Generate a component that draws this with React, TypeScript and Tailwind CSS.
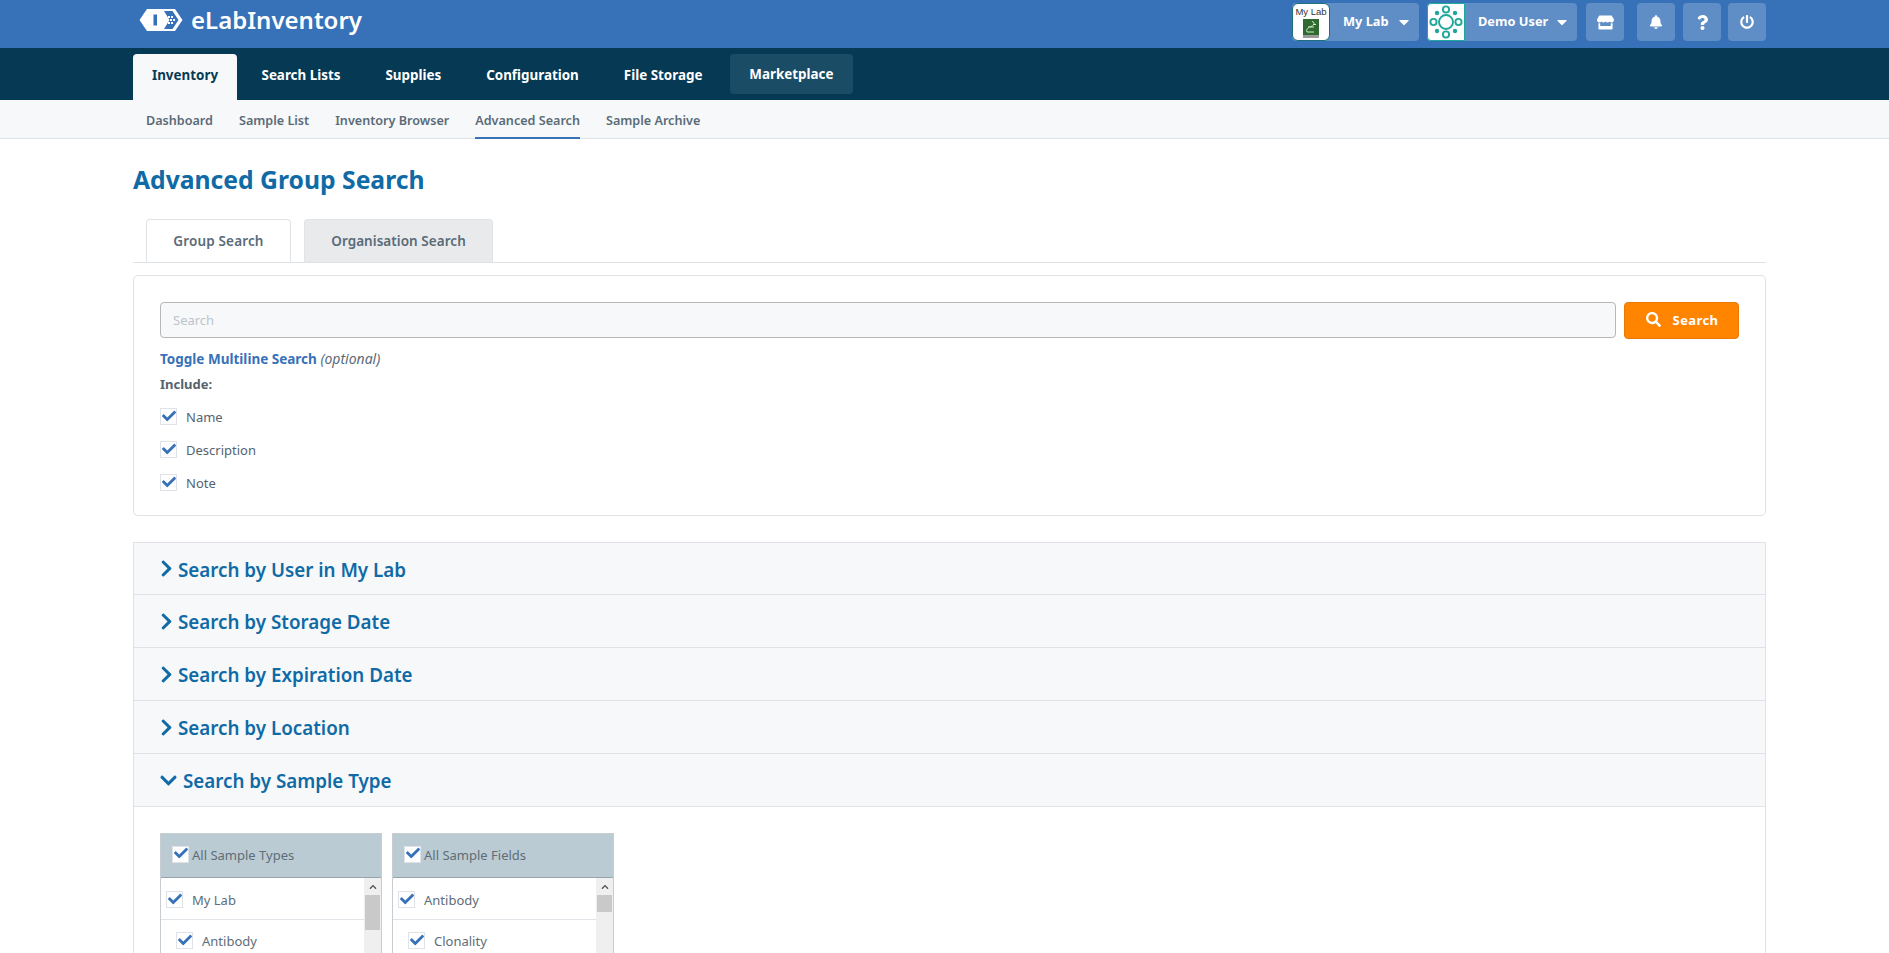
import React from "react";
import { FaBell, FaCaretDown, FaCheck, FaChevronDown, FaChevronRight, FaChevronUp, FaPowerOff, FaQuestion, FaSearch, FaStore } from "react-icons/fa";

const font = { fontFamily: '"Noto Sans", sans-serif' };

function Logo() {
  return (
    <svg width="44" height="24" viewBox="0 0 44 24" className="shrink-0">
      <path d="M8 1H36L43.5 12L36 23H8L0.5 12Z" fill="#fff" />
      <rect x="14.5" y="6.5" width="3.5" height="11" fill="#3771b8" />
      <path d="M25 3H33.5L39.5 12L33.5 21H25L30.5 12Z" fill="#3771b8" />
      <g fill="#fff">
        <rect x="29" y="8" width="2" height="2" />
        <rect x="32" y="8" width="2" height="2" />
        <rect x="31" y="11" width="2" height="2" />
        <rect x="34" y="11" width="2" height="2" />
        <rect x="29" y="14" width="2" height="2" />
        <rect x="32" y="14" width="2" height="2" />
      </g>
    </svg>
  );
}

function UserMark() {
  const c = "#1fa79a";
  return (
    <svg width="34" height="34" viewBox="0 0 34 34">
      <g fill="none" stroke={c} strokeWidth="1.9">
        <circle cx="17" cy="17" r="7" />
        <circle cx="17" cy="4.5" r="3.1" />
        <circle cx="17" cy="29.5" r="3.1" />
        <circle cx="4.5" cy="17" r="3.1" />
        <circle cx="29.5" cy="17" r="3.1" />
      </g>
      <g fill={c}>
        <circle cx="8" cy="8" r="2.2" />
        <circle cx="26" cy="8" r="2.2" />
        <circle cx="8" cy="26" r="2.2" />
        <circle cx="26" cy="26" r="2.2" />
      </g>
    </svg>
  );
}

function LabMark() {
  return (
    <div className="w-[38px] h-[38px] shrink-0 bg-white border border-[#1e6f7a] rounded-[6px] flex flex-col items-center overflow-hidden">
      <span className="text-[9.5px] leading-[13px] text-[#333] mt-[1px] whitespace-nowrap" style={{ fontFamily: '"Liberation Sans", sans-serif' }}>My Lab</span>
      <svg width="16" height="19" viewBox="0 0 16 19" className="mt-[1px]">
        <rect width="16" height="16" fill="#2f6b2f" />
        <rect y="16" width="16" height="3" fill="#9a9a9a" />
        <path d="M9 2.5C12 3 12 6 8 7.5S3 11 4 13M4 13H11M5 8H11M10 5.5H13" fill="none" stroke="#cfe8cf" strokeWidth="1" />
      </svg>
    </div>
  );
}

function IconButton({ children, className = "" }: { children: React.ReactNode; className?: string }) {
  return (
    <div className={`w-[38px] h-[38px] rounded-[4px] bg-[#5f8dc6] flex items-center justify-center text-white ${className}`}>
      {children}
    </div>
  );
}

function Check({ className = "" }: { className?: string }) {
  return (
    <span className={`w-[17px] h-[17px] shrink-0 bg-white border border-[#dfe2e6] flex items-center justify-center ${className}`}>
      <FaCheck className="text-[#3771b8] text-[14px] -mt-[2px]" />
    </span>
  );
}

const mainTabs = ["Search Lists", "Supplies", "Configuration", "File Storage"];
const subTabs = ["Dashboard", "Sample List", "Inventory Browser", "Advanced Search", "Sample Archive"];
const sections = ["Search by User in My Lab", "Search by Storage Date", "Search by Expiration Date", "Search by Location"];

function ListBox({ title, items, thumb }: { title: string; items: string[]; thumb: string }) {
  return (
    <div className="w-[222px] h-[200px] border-x border-t border-[#c8cdd1] shrink-0">
      <div className="h-[44px] bg-[#bacbd3] border-b border-[#98a5ad] flex items-center pl-[11px] gap-[3px]">
        <Check className="-mt-[3px]" />
        <span className="text-[13px] text-[#5e6d78] mt-[1px]">{title}</span>
      </div>
      <div className="flex h-[156px]">
        <div className="flex-1 min-w-0">
          <div className="h-[42px] border-b border-[#e1e4e8] flex items-center pl-[5px] pt-[2px] gap-[9px]">
            <Check />
            <span className="text-[13px] text-[#5e6d78] mt-[2px]">{items[0]}</span>
          </div>
          <div className="h-[41px] flex items-center pl-[15px] gap-[9px]">
            <Check />
            <span className="text-[13px] text-[#5e6d78] mt-[2px]">{items[1]}</span>
          </div>
        </div>
        <div className="w-[17px] bg-[#efefef] flex flex-col">
          <div className="h-[17px] flex items-center justify-center">
            <FaChevronUp className="text-[#505050] text-[8px]" />
          </div>
          <div className={`${thumb} bg-[#c9c9c9] mx-[1px]`} />
        </div>
      </div>
    </div>
  );
}

export default function App() {
  return (
    <div className="h-[953px] overflow-hidden bg-white text-[#55636f]" style={font}>
      <header className="h-[48px] bg-[#3771b8] pl-[139px] pr-[123px] flex items-center">
        <div className="flex items-center gap-[8px] -mt-[8px]">
          <Logo />
          <span className="text-[24px] font-semibold text-white leading-none">eLabInventory</span>
        </div>
        <div className="ml-auto flex items-center -mt-[4px]">
          <div className="w-[127px] h-[38px] rounded-[4px] bg-[#5f8dc6] flex items-center text-white">
            <LabMark />
            <span className="ml-[13px] text-[12.8px] font-bold">My Lab</span>
            <FaCaretDown className="ml-auto mr-[7px] text-[16px]" />
          </div>
          <div className="w-[150px] h-[38px] ml-[8px] rounded-[4px] bg-[#5f8dc6] flex items-center text-white">
            <div className="w-[38px] h-[38px] bg-white border border-[#1fa79a] flex items-center justify-center rounded-l-[4px] shrink-0">
              <UserMark />
            </div>
            <span className="ml-[13px] text-[12.8px] font-bold">Demo User</span>
            <FaCaretDown className="ml-auto mr-[7px] text-[16px]" />
          </div>
          <IconButton className="ml-[9px]"><FaStore className="text-[17px]" /></IconButton>
          <IconButton className="ml-[13px]"><FaBell className="text-[14px]" /></IconButton>
          <IconButton className="ml-[8px]"><FaQuestion className="text-[15px]" /></IconButton>
          <IconButton className="ml-[7px]"><FaPowerOff className="text-[14px]" /></IconButton>
        </div>
      </header>

      <nav className="h-[52px] bg-[#063a54] pl-[133px] flex items-end text-[13.4px] font-bold text-white">
        <div className="w-[104px] h-[46px] pb-[4px] bg-[#f7f8fa] rounded-t-[4px] text-[#063a54] flex items-center justify-center">Inventory</div>
        <div className="ml-[2px] flex">
          {mainTabs.map((t) => (
            <div key={t} className="h-[46px] pb-[4px] px-[22.5px] flex items-center justify-center whitespace-nowrap">{t}</div>
          ))}
        </div>
        <div className="h-[40px] w-[123px] mb-[6px] ml-[5px] rounded-[4px] bg-[#1b4c66] flex items-center justify-center">Marketplace</div>
      </nav>

      <div className="h-[39px] bg-[#f7f8fa] border-b border-[#dfe2e6] pl-[146px] flex gap-[26px] text-[12.6px] font-semibold text-[#5a6b78]">
        {subTabs.map((t) => (
          <div key={t} className={`flex items-center whitespace-nowrap ${t === "Advanced Search" ? "h-[39px] pt-[5px] border-b-2 border-[#3771b8]" : "h-[38px] pt-[4px]"}`}>{t}</div>
        ))}
      </div>

      <main className="ml-[133px] w-[1633px]">
        <h1 className="mt-[24px] text-[24.7px] leading-[34px] font-bold text-[#0f6aa6]">Advanced Group Search</h1>

        <div className="mt-[22px] h-[44px] border-b border-[#dfe2e6] pl-[13px] flex items-end gap-[13px] text-[13.5px] font-semibold">
          <div className="w-[145px] h-[43px] bg-white border border-b-0 border-[#dfe2e6] rounded-t-[4px] flex items-center justify-center text-[#5a6b78] tracking-[0.15px]">Group Search</div>
          <div className="w-[189px] h-[43px] bg-[#e9eaec] border border-b-0 border-[#e1e3e6] rounded-t-[4px] flex items-center justify-center text-[#5a6b78] tracking-[0.05px]">Organisation Search</div>
        </div>

        <section className="mt-[12px] h-[241px] border border-[#dfe2e6] rounded-[5px] pl-[26px] pr-[26px] pt-[26px]">
          <div className="flex gap-[8px]">
            <div className="flex-1 h-[36px] bg-[#f7f8fa] border border-[#b5b8bb] rounded-[4px] flex items-center pl-[12px] pt-[1px] text-[13px] text-[#bcc4ca]">Search</div>
            <div className="w-[115px] h-[37px] bg-[#ff8400] border border-[#ea7a00] rounded-[4px] flex items-center justify-center gap-[12px] pl-[1px] text-white text-[13px] font-bold">
              <FaSearch className="text-[15px] -mt-[2px]" />
              <span className="tracking-[0.4px] mt-[1px]">Search</span>
            </div>
          </div>
          <div className="mt-[10px] text-[13.5px] leading-[20px]">
            <span className="font-bold text-[#3771b8]">Toggle Multiline Search</span> <em className="text-[14px] text-[#5a6b78]">(optional)</em>
          </div>
          <div className="mt-[5px] text-[13px] leading-[20px] font-bold">Include:</div>
          <div className="mt-[14px] flex flex-col gap-[16px] text-[13px]">
            {["Name", "Description", "Note"].map((t) => (
              <div key={t} className="h-[17px] flex items-center gap-[9px]">
                <Check />
                <span className="mt-[3px]">{t}</span>
              </div>
            ))}
          </div>
        </section>

        <section className="mt-[26px] border-x border-t border-[#dfe2e6]">
          {sections.map((t, i) => (
            <div key={t} className={`${i === 0 ? "h-[52px]" : "h-[53px]"} bg-[#f7f8fa] border-b border-[#dfe2e6] pl-[23px] flex items-center gap-[2px] text-[#0f6aa6] text-[18.8px] font-semibold`}>
              <FaChevronRight className="text-[19px]" />
              <span className="mt-[3px]">{t}</span>
            </div>
          ))}
          <div className="h-[53px] bg-[#f7f8fa] border-b border-[#dfe2e6] pl-[25px] flex items-center gap-[5px] text-[#0f6aa6] text-[18.8px] font-semibold">
            <FaChevronDown className="text-[19px]" />
            <span className="mt-[3px]">Search by Sample Type</span>
          </div>
          <div className="pl-[26px] pt-[26px] flex gap-[10px]">
            <ListBox title="All Sample Types" items={["My Lab", "Antibody"]} thumb="h-[35px]" />
            <ListBox title="All Sample Fields" items={["Antibody", "Clonality"]} thumb="h-[17px]" />
          </div>
        </section>
      </main>
    </div>
  );
}
